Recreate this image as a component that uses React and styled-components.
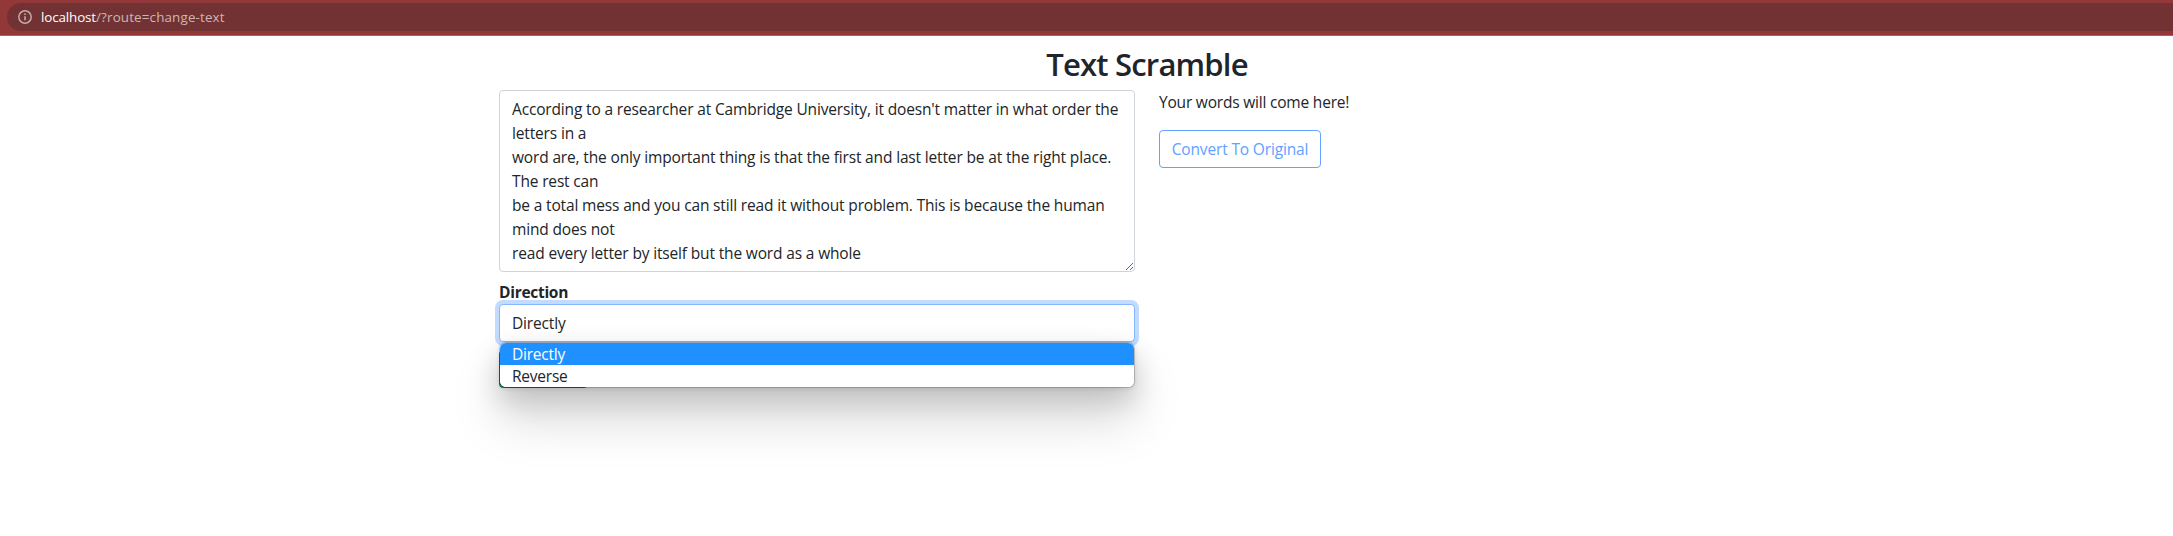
import React, { useState } from 'react';
import styled, { createGlobalStyle } from 'styled-components';

const GlobalStyle = createGlobalStyle`
  *, *::before, *::after { box-sizing: border-box; }
  html, body { margin: 0; padding: 0; overflow: hidden; background: #fff; }
  body {
    font-family: "Open Sans", "Noto Sans", sans-serif;
    font-size: 15.5px;
    line-height: 24px;
    letter-spacing: -0.155px;
    color: #212529;
  }
`;

const Page = styled.div`
  display: flex;
  flex-direction: column;
  height: 536px;
  overflow: hidden;
`;

const BrowserBar = styled.header`
  flex: none;
  height: 36px;
  padding: 3px 0 4px 7px;
  background: #933838;
  border-bottom: 1px solid #a96060;
`;

const AddressField = styled.div`
  display: flex;
  align-items: center;
  gap: 9px;
  height: 28px;
  padding-left: 11px;
  border-radius: 14px 0 0 14px;
  background: #723233;
`;

const InfoIcon = styled.svg`
  flex: none;
  width: 14px;
  height: 14px;
`;

const Url = styled.div`
  display: flex;
  font-size: 13.4px;
  line-height: 20px;
`;

const Host = styled.span`
  color: #fff;
  letter-spacing: -0.12px;
`;

const Path = styled.span`
  color: #d0b4b4;
  letter-spacing: 0.15px;
`;

const Container = styled.main`
  width: 1320px;
  margin-left: 487px;
  padding: 9px 12px 0;
`;

const Title = styled.h2`
  margin: 0 0 7px;
  font-size: 31px;
  font-weight: 540;
  line-height: 38px;
  letter-spacing: -0.8px;
  text-align: center;
`;

const Columns = styled.div`
  display: grid;
  grid-template-columns: 636px 636px;
  column-gap: 24px;
  align-items: start;
`;

const Form = styled.form`
  display: flex;
  flex-direction: column;
  align-items: flex-start;
`;

const SourceText = styled.textarea`
  display: block;
  width: 100%;
  height: 182px;
  margin: 0 0 8px;
  padding: 6px 12px;
  border: 1px solid #ced4da;
  border-radius: 4px;
  outline: 0;
  background: #fff;
  color: inherit;
  font: inherit;
  letter-spacing: inherit;
  resize: vertical;
  overflow: hidden;
`;

const Label = styled.label`
  height: 24px;
  font-weight: 700;
  letter-spacing: -0.28px;
`;

const SelectWrap = styled.div`
  position: relative;
  width: 100%;
  margin-bottom: 8px;
`;

const SelectBox = styled.div`
  height: 38px;
  padding: 6px 12px;
  border: 1px solid #86b7fe;
  border-radius: 4px;
  box-shadow: 0 0 0 4px #c2dbfe;
  background: #fff;
`;

const Menu = styled.ul`
  position: absolute;
  top: 38px;
  left: 0;
  z-index: 2;
  width: 100%;
  margin: 0;
  padding: 0;
  list-style: none;
  border: 1px solid rgba(0, 0, 0, 0.18);
  border-radius: 7px;
  background: #fff;
  background-clip: padding-box;
  box-shadow: 0 32px 50px rgba(0, 0, 0, 0.15), 0 12px 28px rgba(0, 0, 0, 0.18),
    0 1px 4px rgba(0, 0, 0, 0.1);
  overflow: hidden;
`;

const Option = styled.li`
  height: 22px;
  padding-left: 12px;
  line-height: 22px;
  letter-spacing: -0.22px;
  color: ${(p) => (p.$active ? '#fff' : '#212529')};
  background: ${(p) => (p.$active ? '#1e90ff' : '#fff')};
`;

const Button = styled.button`
  height: 38px;
  padding: 0;
  border: 1px solid ${(p) => p.$color};
  border-radius: 4px;
  background: ${(p) => (p.$solid ? p.$color : 'transparent')};
  color: ${(p) => (p.$solid ? '#fff' : p.$color)};
  font: inherit;
  letter-spacing: inherit;
  width: ${(p) => p.$width}px;
`;

const Result = styled.p`
  margin: 0 0 16px;
  letter-spacing: -0.2px;
`;

const TEXT = `According to a researcher at Cambridge University, it doesn't matter in what order the letters in a
word are, the only important thing is that the first and last letter be at the right place. The rest can
be a total mess and you can still read it without problem. This is because the human mind does not
read every letter by itself but the word as a whole`;

const OPTIONS = ['Directly', 'Reverse'];

export default function App() {
  const [text, setText] = useState(TEXT);
  const [direction, setDirection] = useState(OPTIONS[0]);

  return (
    <Page>
      <GlobalStyle />
      <BrowserBar>
        <AddressField>
          <InfoIcon viewBox="0 0 14 14" fill="none" stroke="#c3aaaa">
            <circle cx="7" cy="7" r="6.2" strokeWidth="1.5" />
            <path d="M7 6.2V10.3M7 3.6V5.1" strokeWidth="1.6" />
          </InfoIcon>
          <Url>
            <Host>localhost</Host>
            <Path>/?route=change-text</Path>
          </Url>
        </AddressField>
      </BrowserBar>
      <Container>
        <Title>Text Scramble</Title>
        <Columns>
          <Form>
            <SourceText
              value={text}
              spellCheck={false}
              onChange={(e) => setText(e.target.value)}
            />
            <Label>Direction</Label>
            <SelectWrap>
              <SelectBox>{direction}</SelectBox>
              <Menu>
                {OPTIONS.map((option) => (
                  <Option
                    key={option}
                    $active={option === direction}
                    onClick={() => setDirection(option)}
                  >
                    {option}
                  </Option>
                ))}
              </Menu>
            </SelectWrap>
            <Button type="button" $solid $color="#198754" $width={89} aria-label="Scramble" />
          </Form>
          <section>
            <Result>Your words will come here!</Result>
            <Button type="button" $color="#62a1fe" $width={162}>
              Convert To Original
            </Button>
          </section>
        </Columns>
      </Container>
    </Page>
  );
}
